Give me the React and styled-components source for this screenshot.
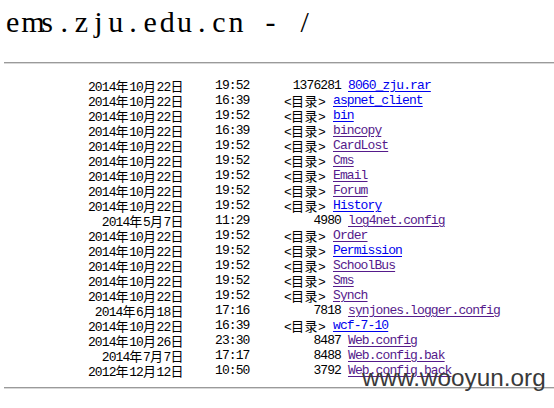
import React from "react";
import styled, { createGlobalStyle } from "styled-components";

const GlobalStyle = createGlobalStyle`
  html, body { margin: 0; padding: 0; background: #ffffff; }
  body { color: #000000; }
`;

const Page = styled.div`
  position: relative;
  width: 554px;
  height: 408px;
  padding: 0 0 0 4px;
  box-sizing: border-box;
  overflow: hidden;
  font-family: "Liberation Mono", "Noto Sans CJK SC", monospace;
`;

const Title = styled.h1`
  display: flex;
  margin: 0;
  padding: 2px 0 0 0;
  height: 44px;
  box-sizing: border-box;
  font-family: "Liberation Serif", "Times New Roman", serif;
  font-size: 30px;
  line-height: 40px;
  font-weight: normal;
`;

const Glyph = styled.span`
  display: inline-block;
  width: 17.2px;
  text-align: center;
  white-space: pre;
`;

const Rule = styled.hr`
  margin: ${(p) => p.$top}px 0 0 0;
  height: 0;
  border: 0;
  border-top: 1px solid #9a9a9a;
  border-bottom: 1px solid #d8d8d8;
`;

const Listing = styled.div`
  margin-top: 14px;
  display: flex;
  flex-direction: column;
  font-size: 13px;
  letter-spacing: -0.9px;
`;

const Row = styled.div`
  display: flex;
  height: 15px;
  line-height: 15px;
  white-space: pre;
`;

const DateCell = styled.span`
  width: 180px;
  text-align: right;
`;

const TimeCell = styled.span`
  margin-left: 31px;
  width: 35px;
`;

const SizeCell = styled.span`
  width: ${(p) => (p.$dir ? 75 : 91)}px;
  text-align: right;
`;

const Cjk = styled.span`
  font-family: "Noto Sans CJK SC", sans-serif;
  letter-spacing: 0.6px;
`;

const Link = styled.a`
  margin-left: ${(p) => (p.$dir ? 8 : 7)}px;
  color: ${(p) => (p.$visited ? "#551a8b" : "#0000ee")};
  text-decoration: underline;
  text-underline-offset: 2px;
  cursor: pointer;
`;

const Watermark = styled.div`
  position: absolute;
  left: 362px;
  top: 364px;
  font-family: "Liberation Sans", Arial, sans-serif;
  font-size: 24.3px;
  line-height: 28px;
  color: #3a3a3a;
  letter-spacing: 0;
  pointer-events: none;
`;

const rows = [
  ["2014年10月22日", "19:52", "1376281", "8060_zju.rar", false],
  ["2014年10月22日", "16:39", null, "aspnet_client", false],
  ["2014年10月22日", "19:52", null, "bin", false],
  ["2014年10月22日", "16:39", null, "bincopy", true],
  ["2014年10月22日", "19:52", null, "CardLost", true],
  ["2014年10月22日", "19:52", null, "Cms", true],
  ["2014年10月22日", "19:52", null, "Email", true],
  ["2014年10月22日", "19:52", null, "Forum", true],
  ["2014年10月22日", "19:52", null, "History", false],
  ["2014年5月7日", "11:29", "4980", "log4net.config", true],
  ["2014年10月22日", "19:52", null, "Order", true],
  ["2014年10月22日", "19:52", null, "Permission", false],
  ["2014年10月22日", "19:52", null, "SchoolBus", true],
  ["2014年10月22日", "19:52", null, "Sms", true],
  ["2014年10月22日", "19:52", null, "Synch", true],
  ["2014年6月18日", "17:16", "7818", "synjones.logger.config", true],
  ["2014年10月22日", "16:39", null, "wcf-7-10", false],
  ["2014年10月26日", "23:30", "8487", "Web.config", true],
  ["2014年7月7日", "17:17", "8488", "Web.config.bak", true],
  ["2012年12月12日", "10:50", "3792", "Web.config.back", true],
];

const title = "ems.zju.edu.cn - /";

function withCjk(text) {
  return text.split(/([\u4e00-\u9fff]+)/).map((part, i) =>
    /[\u4e00-\u9fff]/.test(part) ? <Cjk key={i}>{part}</Cjk> : part
  );
}

export default function App() {
  return (
    <>
      <GlobalStyle />
      <Page>
        <Title aria-label={title}>
          {title.split("").map((ch, i) => (
            <Glyph key={i}>{ch}</Glyph>
          ))}
        </Title>
        <Rule $top={18} />
        <Listing>
          {rows.map(([date, time, size, name, visited]) => {
            const dir = size === null;
            return (
              <Row key={name}>
                <DateCell>{withCjk(date)}</DateCell>
                <TimeCell>{time}</TimeCell>
                <SizeCell $dir={dir}>{dir ? withCjk("<目录>") : size}</SizeCell>
                <Link $dir={dir} $visited={visited}>
                  {name}
                </Link>
              </Row>
            );
          })}
        </Listing>
        <Rule $top={9} />
        <Watermark>www.wooyun.org</Watermark>
      </Page>
    </>
  );
}
